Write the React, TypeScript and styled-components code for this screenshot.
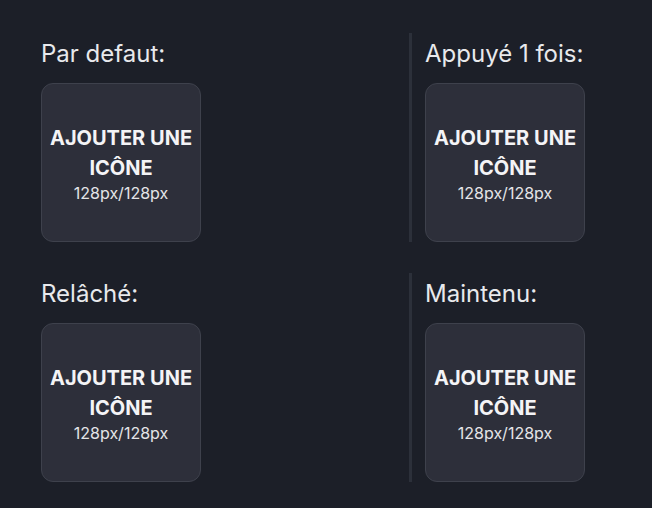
import styled, { createGlobalStyle } from "styled-components";

const GlobalStyle = createGlobalStyle`
  html, body {
    margin: 0;
    padding: 0;
    background: #1c1f28;
  }
  body {
    font-family: Inter, "Noto Sans", sans-serif;
    color: #e8e9ec;
  }
`;

const states = [
  { label: "Par defaut:", divider: false },
  { label: "Appuyé 1 fois:", divider: true },
  { label: "Relâché:", divider: false },
  { label: "Maintenu:", divider: true },
];

const App = () => {
  return (
    <>
      <GlobalStyle />
      <Page>
        <Grid>
          {states.map((s) => (
            <Section key={s.label} $divider={s.divider}>
              <Label>{s.label}</Label>
              <IconSlot>
                <SlotTitle>AJOUTER UNE ICÔNE</SlotTitle>
                <SlotSize>128px/128px</SlotSize>
              </IconSlot>
            </Section>
          ))}
        </Grid>
      </Page>
    </>
  );
};

const Page = styled.div`
  width: 652px;
  height: 508px;
  padding: 33px 0 0 25px;
  box-sizing: border-box;
  overflow: hidden;
`;

const Grid = styled.div`
  display: grid;
  grid-template-columns: 384px 1fr;
  row-gap: 31px;
`;

const Section = styled.div<{ $divider: boolean }>`
  border-left: 3px solid ${(p) => (p.$divider ? "#2c303a" : "transparent")};
  padding-left: 13px;
  display: flex;
  flex-direction: column;
  align-items: flex-start;
`;

const Label = styled.div`
  font-size: 24px;
  line-height: 42px;
  margin-bottom: 8px;
  color: #e8e9ec;
`;

const IconSlot = styled.div`
  width: 160px;
  height: 159px;
  box-sizing: border-box;
  border: 1px solid #3e414c;
  border-radius: 12px;
  background: #2d2f3a;
  display: flex;
  flex-direction: column;
  align-items: center;
  justify-content: center;
  text-align: center;
`;

const SlotTitle = styled.div`
  font-size: 20px;
  font-weight: 700;
  line-height: 30px;
  width: 150px;
  color: #f4f4f6;
`;

const SlotSize = styled.div`
  font-size: 16px;
  line-height: 20px;
  color: #e4e5e8;
`;

export default App;
